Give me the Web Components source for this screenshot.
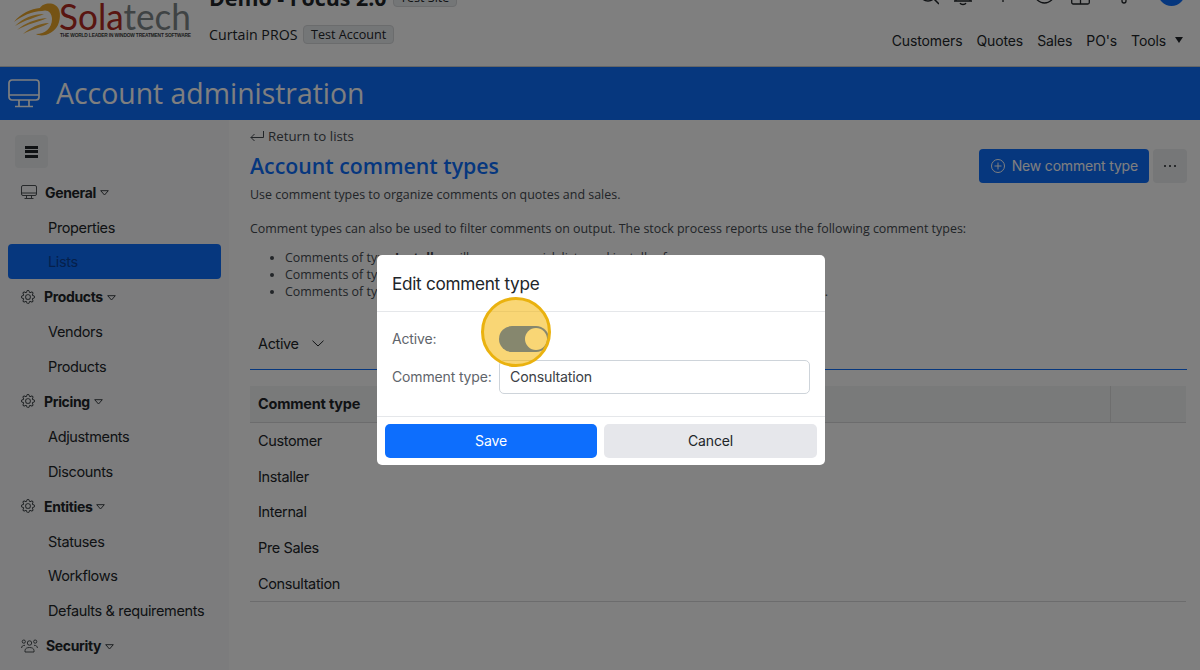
<!doctype html>
<html lang="en"><head><meta charset="utf-8"><title>Account comment types</title>
<style>
html,body{margin:0;height:670px;overflow:hidden;background:#fff;font-family:Inter,"Liberation Sans",sans-serif;color:#212529}
</style></head><body>
<app-shell>
  <site-header></site-header>
  <page-banner>Account administration</page-banner>
  <div slot="side">
    <side-nav>
      <nav-group icon="monitor" gap="8">General</nav-group>
      <nav-link>Properties</nav-link>
      <nav-link active>Lists</nav-link>
      <nav-group icon="gear" gap="9">Products</nav-group>
      <nav-link>Vendors</nav-link>
      <nav-link>Products</nav-link>
      <nav-group icon="gear" gap="9">Pricing</nav-group>
      <nav-link>Adjustments</nav-link>
      <nav-link>Discounts</nav-link>
      <nav-group icon="gear" gap="9">Entities</nav-group>
      <nav-link>Statuses</nav-link>
      <nav-link>Workflows</nav-link>
      <nav-link>Defaults &amp; requirements</nav-link>
      <nav-group icon="people" gap="8">Security</nav-group>
    </side-nav>
  </div>
  <comment-page slot="main"></comment-page>
</app-shell>
<edit-modal></edit-modal>
<script>
const ICONS={
 gear:'<svg width="14" height="14" viewBox="0 0 16 16" fill="currentColor"><path d="M8 4.754a3.246 3.246 0 1 0 0 6.492 3.246 3.246 0 0 0 0-6.492zM5.754 8a2.246 2.246 0 1 1 4.492 0 2.246 2.246 0 0 1-4.492 0z"/><path d="M9.796 1.343c-.527-1.79-3.065-1.79-3.592 0l-.094.319a.873.873 0 0 1-1.255.52l-.292-.16c-1.64-.892-3.433.902-2.54 2.541l.159.292a.873.873 0 0 1-.52 1.255l-.319.094c-1.79.527-1.79 3.065 0 3.592l.319.094a.873.873 0 0 1 .52 1.255l-.16.292c-.892 1.64.901 3.434 2.541 2.54l.292-.159a.873.873 0 0 1 1.255.52l.094.319c.527 1.79 3.065 1.79 3.592 0l.094-.319a.873.873 0 0 1 1.255-.52l.292.16c1.64.893 3.434-.902 2.54-2.541l-.159-.292a.873.873 0 0 1 .52-1.255l.319-.094c1.79-.527 1.79-3.065 0-3.592l-.319-.094a.873.873 0 0 1-.52-1.255l.16-.292c.893-1.64-.902-3.433-2.541-2.54l-.292.159a.873.873 0 0 1-1.255-.52l-.094-.319zm-2.633.283c.246-.835 1.428-.835 1.674 0l.094.319a1.873 1.873 0 0 0 2.693 1.115l.291-.16c.764-.415 1.6.42 1.184 1.185l-.159.292a1.873 1.873 0 0 0 1.116 2.692l.318.094c.835.246.835 1.428 0 1.674l-.319.094a1.873 1.873 0 0 0-1.115 2.693l.16.291c.415.764-.42 1.6-1.185 1.184l-.291-.159a1.873 1.873 0 0 0-2.693 1.116l-.094.318c-.246.835-1.428.835-1.674 0l-.094-.319a1.873 1.873 0 0 0-2.692-1.115l-.292.16c-.764.415-1.6-.42-1.184-1.185l.159-.291A1.873 1.873 0 0 0 1.945 8.93l-.319-.094c-.835-.246-.835-1.428 0-1.674l.319-.094A1.873 1.873 0 0 0 3.06 4.377l-.16-.292c-.415-.764.42-1.6 1.185-1.184l.292.159a1.873 1.873 0 0 0 2.692-1.115l.094-.319z"/></svg>',
 monitor:'<svg width="16" height="14" viewBox="0 0 32 28" fill="none" stroke="currentColor" stroke-width="1.800"><rect x="1" y="1" width="30" height="20" rx="3"/><path d="M1 16h30M11 21v5M21 21v5M7 27h18"/></svg>',
 people:'<svg width="17" height="14" viewBox="0 0 17 14" fill="none" stroke="currentColor" stroke-width=".9"><circle cx="8.500" cy="4" r="2.200"/><circle cx="2.800" cy="2.600" r="1.600"/><circle cx="14.200" cy="2.600" r="1.600"/><path d="M4 13v-1.500C4 9.500 6 8.500 8.500 8.500S13 9.500 13 11.500V13zM.6 9c0-1.600 1-2.700 3.400-2.700M16.400 9c0-1.600-1-2.700-3.400-2.700"/></svg>'
};
function def(name,html){
  customElements.define(name,class extends HTMLElement{
    constructor(){super();this.attachShadow({mode:'open'}).innerHTML=html}
  });
}
def('app-shell',`<style>
:host{display:block;height:670px;overflow:hidden}
.cols{display:flex;height:550px}
.side{width:229px;flex:none;background:#f8f9fa}
.main{flex:1;min-width:0}
</style><slot></slot><div class="cols"><div class="side"><slot name="side"></slot></div><div class="main"><slot name="main"></slot></div></div>`);

def('solatech-logo',`<style>:host{display:block;width:180px;height:36px}svg{display:block}</style>
<svg width="180" height="36" viewBox="0 0 180 36">
<path d="M0 20C7 11 17 7 26 6C28 2 36 0 41 3C47 6 47 16 44 23C40 31 29 36 22 32C31 32 38 26 38 17C38 10 33 7 28 9C18 9 8 14 0 20Z" fill="#eaa62a"/>
<path d="M1 24C9 16 19 12 30 12C23 15 11 18 1 24ZM3 28C11 21 21 17 33 16C25 20 13 22 3 28ZM9 32C16 26 25 21 35 21C29 25 18 27 9 32Z" fill="#eeb13c"/>
<text x="45" y="27.500" font-family="Lato,sans-serif" font-size="36" textLength="132" lengthAdjust="spacingAndGlyphs"><tspan fill="#b22a22">Sola</tspan><tspan fill="#7f8689">tech</tspan></text>
<text x="46" y="35" font-family="'Liberation Sans',sans-serif" font-weight="700" font-size="4.800" fill="#3a3a3a" textLength="131">THE WORLD LEADER IN WINDOW TREATMENT SOFTWARE</text>
</svg>`);

def('tag-pill',`<style>:host{display:inline-block;box-sizing:border-box;background:#e9ecef;border:1px solid #d6d8db;border-radius:4px;padding:0 6.500px;font:12.600px/17px "Open Sans",sans-serif;color:#212529}</style><slot></slot>`);

def('site-header',`<style>
:host{display:flex;box-sizing:border-box;height:89px;margin-top:-22px;padding-left:14px;background:#fff;border-bottom:1px solid #c9ccd0}
solatech-logo{margin-top:24px;flex:none}
.id{margin-left:15px;font-family:"Open Sans",sans-serif;flex:none}
h1{margin:3px 0 0;font-size:21.400px;line-height:33px;font-weight:700;display:flex;align-items:center;gap:6px;white-space:nowrap}
h1 tag-pill{font-weight:400;margin-top:-1px}
.acct{display:flex;align-items:center;gap:6px;font-size:14.200px;margin-top:11px;height:19px}
.r{margin-left:auto;padding-right:17px;display:flex;flex-direction:column;align-items:flex-end}
.icons{display:flex;align-items:flex-end;height:28px;color:#212529;margin-right:-2px}
.icons svg{display:block}
.av{width:27px;height:27px;border-radius:50%;background:#0d6efd;margin-left:31px}
nav{display:flex;gap:14px;margin-top:26px;font-size:14px;line-height:17px;letter-spacing:-.12px;align-items:center}
.caret{width:0;height:0;border:4px solid transparent;border-top:6px solid #212529;border-bottom:0;margin-left:-5px;margin-top:-2px}
</style>
<solatech-logo></solatech-logo>
<div class="id"><h1>Demo - Focus 2.0 <tag-pill>Test Site</tag-pill></h1>
<div class="acct">Curtain PROS <tag-pill>Test Account</tag-pill></div></div>
<div class="r"><div class="icons">
<svg width="20" height="24" viewBox="0 0 20 24" fill="none" stroke="currentColor" stroke-width="1.500"><circle cx="9" cy="11" r="8"/><path d="M15 17l5 5"/></svg>
<svg width="20" height="24" viewBox="0 0 20 24" fill="none" stroke="currentColor" stroke-width="1.300" style="margin-left:14px"><path d="M1 19h18M3 19v-8a7 7 0 0 1 14 0v8M7 21c1 2 5 2 6 0"/></svg>
<svg width="14" height="24" viewBox="0 0 14 24" fill="none" stroke="currentColor" stroke-width="1.300" style="margin-left:23px;margin-bottom:4px"><path d="M7 2v22M1 13h12"/></svg>
<svg width="21" height="24" viewBox="0 0 21 24" fill="none" stroke="currentColor" stroke-width="1.300" style="margin-left:24px;margin-bottom:2px"><circle cx="10.500" cy="13" r="10"/></svg>
<svg width="19" height="24" viewBox="0 0 19 24" fill="none" stroke="currentColor" stroke-width="1.300" style="margin-left:16px;margin-bottom:1px"><rect x=".7" y="6" width="17.600" height="17" rx="1.500"/><path d="M9.500 6v17"/></svg>
<svg width="6" height="24" viewBox="0 0 6 24" fill="none" stroke="currentColor" stroke-width="1.300" style="margin-left:31px;margin-bottom:2px"><path d="M1 10v11a2 2 0 0 0 4 0V12"/></svg>
<span class="av"></span></div>
<nav><span>Customers</span><span>Quotes</span><span>Sales</span><span>PO's</span><span>Tools</span><i class="caret"></i></nav></div>`);

def('page-banner',`<style>
:host{display:flex;align-items:center;height:53px;box-sizing:border-box;padding:0 0 .5px 8px;background:#0d6efd;color:#fff;font:28.400px/1 "Open Sans",sans-serif;gap:16px}
svg{display:block;flex:none}
</style>
<svg width="32" height="29" viewBox="0 0 32 29" fill="none" stroke="#fff" stroke-width="1.700"><rect x="1" y="1" width="30" height="20" rx="3"/><path d="M1 16h30M11 21v6M21 21v6M7 27.500h18"/></svg><slot></slot>`);

def('side-nav',`<style>
:host{display:block;padding:15px 8px 0}
.t{display:flex;align-items:center;justify-content:center;width:33px;height:33px;margin:0 0 6.700px 7px;background:#eceef0;border-radius:4px}
.t i{display:block;width:13px;height:12px;background:linear-gradient(#212529 0 3px,transparent 3px 4.500px,#212529 4.500px 7.500px,transparent 7.500px 9px,#212529 9px)}
</style><div class="t"><i></i></div><slot></slot>`);

customElements.define('nav-group',class extends HTMLElement{
  constructor(){super();const g=this.getAttribute('gap')||'8';
    this.attachShadow({mode:'open'}).innerHTML=`<style>
:host{display:flex;align-items:center;height:34.900px;padding-left:13px;font-size:14px;font-weight:700;letter-spacing:-.35px;color:#212529}
.i{flex:none;display:flex;color:#3a3f44;margin-right:${g}px}
.c{margin-left:4px;margin-top:2px}
</style><span class="i">${ICONS[this.getAttribute('icon')]}</span><slot></slot>
<svg class="c" width="9" height="6" viewBox="0 0 9 6" fill="none" stroke="#3a3f44"><path d="M.7.700h7.600L4.500 5z"/></svg>`;}
});
customElements.define('nav-link',class extends HTMLElement{
  constructor(){super();this.attachShadow({mode:'open'}).innerHTML=`<style>
:host{display:flex;align-items:center;height:34.900px;box-sizing:border-box;padding-left:40px;font-size:14.500px;letter-spacing:-.36px;color:#212529;border-radius:4px}
:host([active]){background:#0d6efd;color:#0a4199}
</style><slot></slot>`;}
});

def('comment-table',`<style>
:host{display:block;font-size:14.500px;letter-spacing:-.36px;margin-right:1px}
.h{display:grid;grid-template-columns:1fr 76px;box-sizing:border-box;height:37px;background:#f3f4f5;border-bottom:1px solid #d8d9da;font-weight:700;align-items:stretch;letter-spacing:-.2px}
.h>div{display:flex;align-items:center;padding-left:8px}
.h>div+div{border-left:1px solid #dcdcdc}
.r{display:flex;align-items:center;height:35.700px;padding-left:8px}
.b{border-top:1px solid #d8d9da}
</style><div class="h"><div>Comment type</div><div></div></div>
<div class="r">Customer</div><div class="r">Installer</div><div class="r">Internal</div><div class="r">Pre Sales</div><div class="r">Consultation</div><div class="b"></div>`);

def('comment-page',`<style>
:host{display:block;padding:7px 13px 0 21px;font:12.450px/17px "Open Sans",sans-serif;color:#444a50}
.top{display:flex;justify-content:space-between}
.ret{display:flex;align-items:center;gap:4px;font-size:13.300px;line-height:18px;color:#444a50}
h2{margin:5px 0 0;font-size:21.300px;line-height:31px;font-weight:600;color:#0d6efd}
.btns{display:flex;gap:4px;margin-top:21.500px;height:34px;font-family:Inter,sans-serif}
.new{display:flex;align-items:center;gap:7px;padding:0 11px 0 12px;background:#0d6efd;color:#fff;border-radius:4px;font-size:14px;letter-spacing:-.18px;white-space:nowrap}
.more{display:flex;align-items:center;justify-content:center;width:34px;background:#eceef0;border-radius:4px;color:#212529;gap:3px}
.more i{width:2px;height:2px;background:#212529;border-radius:50%}
p{margin:0}
.d1{margin-top:3px}
.d2{margin-top:17px}
ul{margin:12px 0 0;padding-left:35px}
li{white-space:nowrap;height:17px}
.filter{display:flex;align-items:center;gap:13px;height:48px;padding-bottom:1px;margin-top:20px;padding-left:8px;font:14.500px Inter,sans-serif;letter-spacing:-.36px;color:#212529;border-bottom:1px solid #0d6efd}
comment-table{margin-top:16px;color:#212529;font-family:Inter,sans-serif}
</style>
<div class="top"><div>
<div class="ret"><svg width="14" height="12" viewBox="0 0 14 12" fill="none" stroke="#444a50"><path d="M13.500 1v6.500H.800M4.500 4L1 7.500 4.500 11"/></svg>Return to lists</div>
<h2>Account comment types</h2></div>
<div class="btns"><div class="new"><svg width="14" height="14" viewBox="0 0 14 14" fill="none" stroke="#fff"><circle cx="7" cy="7" r="6.500"/><path d="M7 3.500v7M3.500 7h7"/></svg>New comment type</div><div class="more"><i></i><i></i><i></i></div></div></div>
<p class="d1">Use comment types to organize comments on quotes and sales.</p>
<p class="d2">Comment types can also be used to filter comments on output. The stock process reports use the following comment types:</p>
<ul><li>Comments of type <b>Installer</b> will appear on pick lists and installer forms.</li>
<li>Comments of type <b>Customer</b> will appear on quotes and sales orders.</li>
<li>Comments of type <b>Internal</b> will appear on internal reports and will not print on other reports.</li></ul>
<div class="filter">Active <svg width="12" height="7" viewBox="0 0 12 7" fill="none" stroke="#212529"><path d="M.5.700L6 6 11.500.700"/></svg></div>
<comment-table></comment-table>`);

def('toggle-switch',`<style>
:host{display:block;position:relative;width:50px;height:26px;border-radius:13px;background:#0050f0}
i{position:absolute;right:2px;top:2px;width:22px;height:22px;border-radius:50%;background:#fff}
</style><i></i>`);

def('focus-ring',`<style>
:host{display:block;position:absolute;box-sizing:border-box;width:70px;height:70px;border-radius:50%;border:3.500px solid #eab20f;background:rgba(244,180,4,.55)}
</style>`);

def('edit-modal',`<style>
:host{position:fixed;inset:0;display:flex;justify-content:center;padding:255px 0 0 2px;box-sizing:border-box;background:rgba(0,0,0,.5);font-family:Inter,sans-serif;letter-spacing:-.15px}
.m{position:relative;box-sizing:border-box;width:448px;height:210px;background:#fff;border-radius:5px;color:#212529}
.t{height:57px;box-sizing:border-box;padding:0 15px;display:flex;align-items:center;border-bottom:1px solid #e5e7ea;font-size:17.200px;letter-spacing:-.3px}
.b{height:105px;box-sizing:border-box;padding:13px 15px 0;display:grid;grid-template-columns:107px 1fr;grid-template-rows:28px 34px;row-gap:7px;align-items:center;font-size:14px;color:#5f656b;border-bottom:1px solid #e5e7ea}
.b span{padding-bottom:1px}
.in{height:34px;box-sizing:border-box;border:1px solid #ced4da;border-radius:5px;padding:0 0 1px 10px;display:flex;align-items:center;color:#3c4146;font-size:14.200px;letter-spacing:-.2px}
.f{display:grid;grid-template-columns:212px 213px;gap:7px;padding:7px 8px}
.f div{height:33.500px;border-radius:5px;display:flex;align-items:center;justify-content:center;font-size:14px;background:#e6e7eb}
.f .s{background:#0d6efd;color:#fff}
focus-ring{left:104px;top:42px}
</style><div class="m"><div class="t">Edit comment type</div>
<div class="b"><span>Active:</span><toggle-switch></toggle-switch><span>Comment type:</span><div class="in">Consultation</div></div>
<div class="f"><div class="s">Save</div><div>Cancel</div></div><focus-ring></focus-ring></div>`);
</script>
</body></html>
